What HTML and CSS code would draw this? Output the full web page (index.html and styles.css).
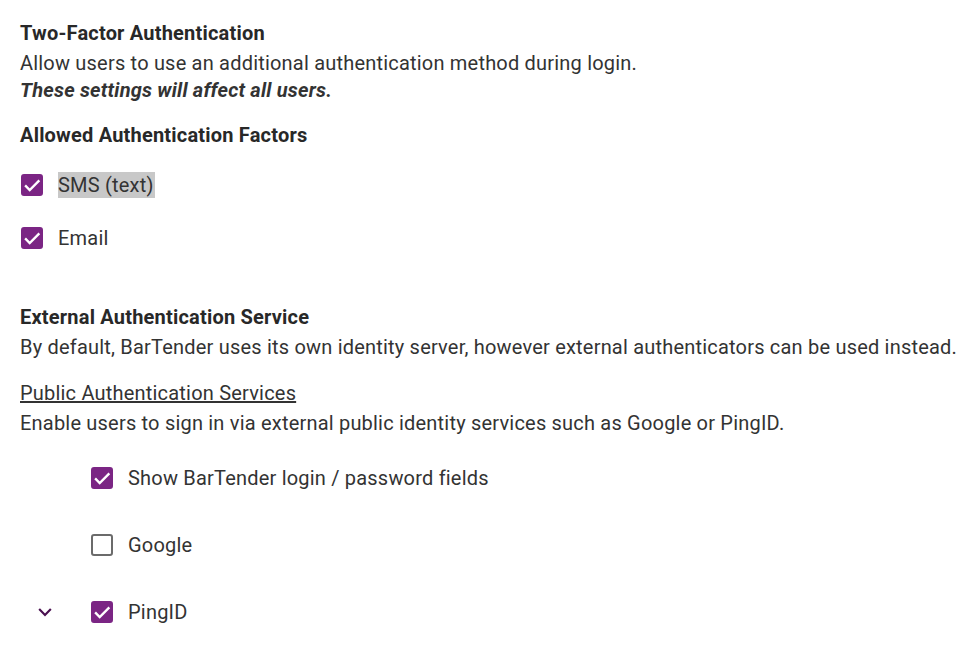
FILE: index.html
```html
<!DOCTYPE html>
<html lang="en">
<head>
    <meta charset="UTF-8">
    <title>Two-Factor Authentication</title>
    <link rel="stylesheet" href="styles.css">
</head>
<body>
    <section class="section">
        <h3 class="title">Two-Factor Authentication</h3>
        <p class="text">Allow users to use an additional authentication method during login.</p>
        <p class="text warn">These settings will affect all users.</p>

        <h3 class="title factors-title">Allowed Authentication Factors</h3>
        <label class="check-row factor">
            <span class="box checked"><svg viewBox="0 0 24 24"><path d="M4.5 12.5l5 5L20 7"/></svg></span>
            <span class="label selected">SMS (text)</span>
        </label>
        <label class="check-row factor">
            <span class="box checked"><svg viewBox="0 0 24 24"><path d="M4.5 12.5l5 5L20 7"/></svg></span>
            <span class="label">Email</span>
        </label>
    </section>

    <section class="section">
        <h3 class="title external-title">External Authentication Service</h3>
        <p class="text">By default, BarTender uses its own identity server, however external authenticators can be used instead.</p>
        <p class="text subhead"><u>Public Authentication Services</u></p>
        <p class="text">Enable users to sign in via external public identity services such as Google or PingID.</p>

        <div class="services">
            <div class="check-row service">
                <span class="expander"></span>
                <span class="box checked"><svg viewBox="0 0 24 24"><path d="M4.5 12.5l5 5L20 7"/></svg></span>
                <span class="label">Show BarTender login / password fields</span>
            </div>
            <div class="check-row service">
                <span class="expander"></span>
                <span class="box"></span>
                <span class="label">Google</span>
            </div>
            <div class="check-row service">
                <span class="expander"><svg viewBox="0 0 24 24"><path d="M5 8.5l7 7 7-7"/></svg></span>
                <span class="box checked"><svg viewBox="0 0 24 24"><path d="M4.5 12.5l5 5L20 7"/></svg></span>
                <span class="label">PingID</span>
            </div>
        </div>
    </section>
</body>
</html>
```

FILE: styles.css
```css
body {
    font-family: 'Roboto', sans-serif;
    color: #333333;
    background-color: #ffffff;
    margin: 0;
    padding: 20px 20px 0 20px;
    font-size: 20px;
    letter-spacing: 0.2px;
}
.title {
    margin: 0 0 3px 0;
    font-size: 20px;
    font-weight: bold;
    line-height: 27px;
    color: #282828;
}
.text {
    margin: 0;
    line-height: 27px;
}
.warn {
    font-weight: bold;
    font-style: italic;
}
.factors-title {
    margin-top: 18px;
}
.check-row {
    display: flex;
    align-items: center;
}
.factor {
    height: 26px;
    margin-top: 23px;
    padding-left: 1px;
}
.factor + .factor {
    margin-top: 27px;
}
.box {
    width: 22px;
    height: 22px;
    box-sizing: border-box;
    border: 2px solid #6b6b6b;
    border-radius: 3px;
    display: flex;
    align-items: center;
    justify-content: center;
    flex-shrink: 0;
}
.box.checked {
    background-color: #7b2584;
    border-color: #7b2584;
}
.box svg {
    width: 22px;
    height: 22px;
    flex-shrink: 0;
    fill: none;
    stroke: #ffffff;
    stroke-width: 2.6;
}
.label {
    margin-left: 15px;
    line-height: 26px;
}
.selected {
    background-color: #c8c8c8;
    padding: 0 1px 0 0;
}
.external-title {
    margin-top: 53px;
}
.subhead {
    margin-top: 19px;
    margin-bottom: 3px;
}
.services {
    margin-top: 26px;
}
.service {
    height: 30px;
    margin-bottom: 37px;
}
.expander {
    width: 24px;
    height: 24px;
    margin-left: 13px;
    margin-right: 34px;
    display: flex;
    align-items: center;
    justify-content: center;
}
.expander svg {
    width: 20px;
    height: 20px;
    fill: none;
    stroke: #4a1050;
    stroke-width: 2.6;
}
.service .label {
    margin-left: 15px;
}
```
